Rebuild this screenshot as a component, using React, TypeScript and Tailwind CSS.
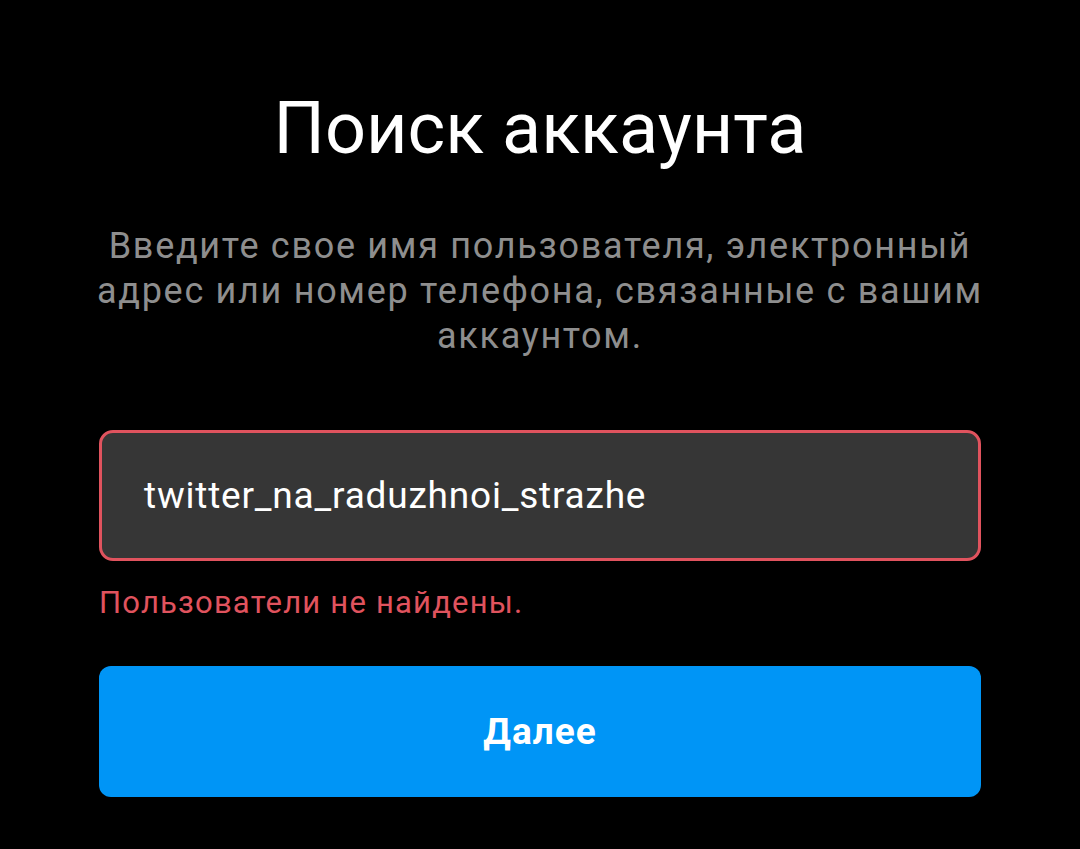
import React from "react";

export default function App() {
  return (
    <div
      className="min-h-[849px] w-full bg-black px-[99px] pt-[81px]"
      style={{ fontFamily: "Roboto, 'Noto Sans', sans-serif" }}
    >
      <h1 className="text-center text-[72px] font-normal leading-[96px] text-white">
        Поиск аккаунта
      </h1>

      <p className="-mx-[40px] mt-[47px] whitespace-nowrap text-center text-[36px] leading-[45px] tracking-[1.7px] text-[#8e8e8e]">
        Введите свое имя пользователя, электронный
        <br />
        адрес или номер телефона, связанные с вашим
        <br />
        аккаунтом.
      </p>

      <div className="mt-[71px] flex h-[131px] items-center rounded-[14px] border-[3px] border-[#e0535e] bg-[#363636] px-[42px]">
        <span className="text-[37px] tracking-[0.8px] text-white">twitter_na_raduzhnoi_strazhe</span>
      </div>

      <div className="mt-[22px] text-[31px] leading-[40px] tracking-[1.2px] text-[#e0535e]">
        Пользователи не найдены.
      </div>

      <button className="mt-[43px] flex h-[131px] w-full items-center justify-center rounded-[12px] bg-[#0095f6] text-[37px] font-bold tracking-[1px] text-white">
        Далее
      </button>
    </div>
  );
}
